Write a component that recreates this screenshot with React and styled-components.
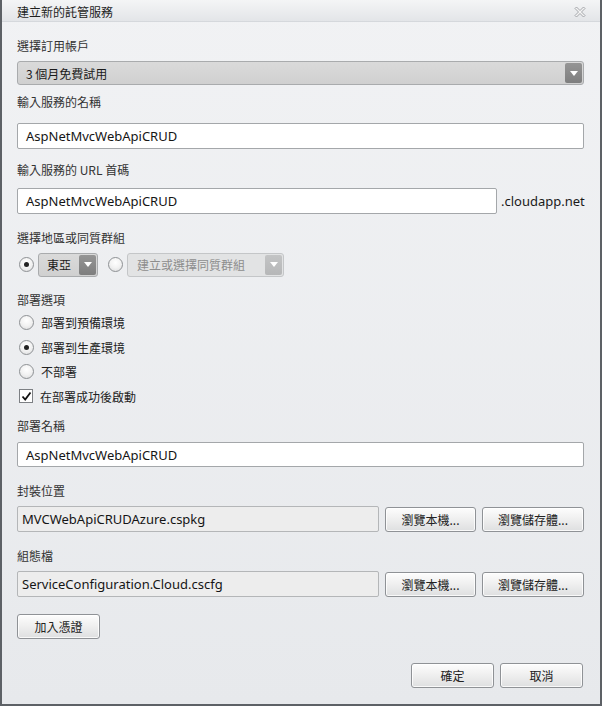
import React from "react";
import styled, { createGlobalStyle } from "styled-components";

const Global = createGlobalStyle`
  html, body { margin: 0; padding: 0; background: #ffffff; }
  * { box-sizing: border-box; }
`;

const CJK = `"Noto Sans CJK TC", "Noto Sans", sans-serif`;
const LAT = `"Noto Sans", "Noto Sans CJK TC", sans-serif`;

const Frame = styled.div`
  width: 602px;
  height: 706px;
  border-left: 2px solid #5d6166;
  border-right: 2px solid #5d6166;
  border-bottom: 2px solid #5d6166;
  background: linear-gradient(#f1f2f4, #e7e9ec);
  display: flex;
  flex-direction: column;
  font-family: ${CJK};
  & > * { flex-shrink: 0; }
`;

const TitleBar = styled.div`
  height: 22px;
  display: flex;
  align-items: center;
  justify-content: space-between;
  padding: 3px 14px 0 15px;
  background: linear-gradient(#f4f5f6, #e3e5e8);
  border-bottom: 1px solid #d5d8dc;
`;

const Title = styled.span`
  font-size: 12px;
  color: #1e1e1e;
  line-height: 16px;
`;

const Content = styled.div`
  display: flex;
  flex-direction: column;
  padding: 0 16px 0 15px;
  & > * { flex-shrink: 0; }
`;

const Label = styled.div`
  margin-top: ${(p) => p.$mt}px;
  height: 16px;
  line-height: 16px;
  font-size: 12px;
  color: #333;
`;

const Row = styled.div`
  margin-top: ${(p) => p.$mt || 0}px;
  display: flex;
  align-items: center;
  gap: ${(p) => p.$gap || 6}px;
  height: ${(p) => p.$h}px;
`;

const Select = styled.div`
  height: 24px;
  width: ${(p) => (p.$w ? p.$w + "px" : "100%")};
  flex: ${(p) => (p.$w ? "none" : "1 1 auto")};
  display: flex;
  align-items: center;
  border: 1px solid ${(p) => (p.$disabled ? "#c4c6c8" : "#a9abad")};
  border-radius: 3px;
  background: ${(p) => (p.$disabled ? "#e2e3e4" : "linear-gradient(#dadada, #d0d0d0)")};
  padding: 1px;
`;

const SelectText = styled.span`
  flex: 1;
  padding-left: ${(p) => p.$pl}px;
  font-size: 12px;
  color: ${(p) => (p.$disabled ? "#8d8d8d" : "#1a1a1a")};
  font-family: ${CJK};
  white-space: nowrap;
`;

const Arrow = styled.span`
  width: 17px;
  height: 20px;
  border-radius: 2px;
  background: ${(p) => (p.$disabled ? "linear-gradient(#c3c4c5,#b6b7b8)" : "linear-gradient(#959595, #7e7e7e)")};
  display: flex;
  align-items: center;
  justify-content: center;
`;

const Input = styled.div`
  height: ${(p) => p.$h || 26}px;
  width: ${(p) => (p.$w ? p.$w + "px" : "auto")};
  flex: none;
  margin-top: ${(p) => p.$mt || 0}px;
  border: 1px solid ${(p) => (p.$ro ? "#b4b6b8" : "#a4a7aa")};
  border-radius: 2px;
  background: ${(p) => (p.$ro ? "#ededed" : "#ffffff")};
  display: flex;
  align-items: center;
  padding-left: ${(p) => (p.$ro ? 4 : 8)}px;
  font-family: ${LAT};
  font-size: 13px;
  color: #151515;
  white-space: nowrap;
`;

const Suffix = styled.span`
  font-family: ${LAT};
  font-size: 13px;
  color: #1a1a1a;
`;

const Button = styled.button`
  width: ${(p) => p.$w}px;
  height: ${(p) => p.$h || 25}px;
  flex: none;
  border: 1px solid #8f9296;
  border-radius: 3px;
  background: linear-gradient(#fdfdfd 0%, #f0f0f0 45%, #dedfe0 100%);
  box-shadow: inset 0 0 0 1px rgba(255, 255, 255, 0.8);
  font-family: ${CJK};
  font-size: 12px;
  color: #222;
  padding: 0;
`;

const Footer = styled.div`
  margin-top: ${(p) => p.$mt}px;
  display: flex;
  justify-content: flex-end;
  gap: 6px;
  padding-right: 1px;
`;

const RadioCircle = styled.span`
  width: 15px;
  height: 15px;
  flex: none;
  border-radius: 50%;
  border: 1px solid #8e9194;
  background: radial-gradient(circle at 50% 35%, #ffffff 0%, #f2f2f2 50%, #d9dadb 100%);
  display: flex;
  align-items: center;
  justify-content: center;
  &::after {
    content: "";
    width: 5px;
    height: 5px;
    border-radius: 50%;
    background: #222;
    display: ${(p) => (p.$on ? "block" : "none")};
  }
`;

const OptionRow = styled.div`
  height: ${(p) => p.$h || 24}px;
  margin-top: ${(p) => p.$mt || 0}px;
  display: flex;
  align-items: center;
  gap: 7px;
  padding-left: ${(p) => p.$pl || 2}px;
  font-size: 12px;
  color: #222;
`;

const Check = styled.span`
  width: 14px;
  height: 14px;
  flex: none;
  border: 1px solid #7d8084;
  background: #fff;
  display: flex;
  align-items: center;
  justify-content: center;
`;

const DownArrow = ({ color = "#fff" }) => (
  <svg width="8" height="5" viewBox="0 0 8 5">
    <path d="M0 0 L8 0 L4 5 Z" fill={color} />
  </svg>
);

const CloseIcon = () => (
  <svg width="12" height="12" viewBox="0 0 12 12">
    <path
      d="M1 2.5 L2.5 1 L6 4.5 L9.5 1 L11 2.5 L7.5 6 L11 9.5 L9.5 11 L6 7.5 L2.5 11 L1 9.5 L4.5 6 Z"
      fill="#f4f4f4"
      stroke="#9a9ca0"
      strokeWidth="0.9"
    />
  </svg>
);

const CheckMark = () => (
  <svg width="11" height="11" viewBox="0 0 11 11">
    <path d="M1.5 5.5 L4.2 8.5 L9.5 1.5" fill="none" stroke="#111" strokeWidth="1.8" />
  </svg>
);

export default function App() {
  return (
    <>
      <Global />
      <Frame>
        <TitleBar>
          <Title>建立新的託管服務</Title>
          <CloseIcon />
        </TitleBar>
        <Content>
          <Label $mt={16}>選擇訂用帳戶</Label>
          <Row $mt={7} $h={24}>
            <Select>
              <SelectText $pl={7}>3 個月免費試用</SelectText>
              <Arrow>
                <DownArrow />
              </Arrow>
            </Select>
          </Row>

          <Label $mt={9}>輸入服務的名稱</Label>
          <Input $mt={13}>AspNetMvcWebApiCRUD</Input>

          <Label $mt={13}>輸入服務的 URL 首碼</Label>
          <Row $mt={10} $h={26} $gap={4}>
            <Input $w={480}>AspNetMvcWebApiCRUD</Input>
            <Suffix>.cloudapp.net</Suffix>
          </Row>

          <Label $mt={16}>選擇地區或同質群組</Label>
          <Row $mt={6} $h={25} $gap={4}>
            <OptionRow $pl={2}>
              <RadioCircle $on />
            </OptionRow>
            <Select $w={60}>
              <SelectText $pl={7}>東亞</SelectText>
              <Arrow>
                <DownArrow />
              </Arrow>
            </Select>
            <OptionRow $pl={6}>
              <RadioCircle />
            </OptionRow>
            <Select $w={157} $disabled>
              <SelectText $pl={8} $disabled>
                建立或選擇同質群組
              </SelectText>
              <Arrow $disabled>
                <DownArrow />
              </Arrow>
            </Select>
          </Row>

          <Label $mt={15}>部署選項</Label>
          <OptionRow $mt={2}>
            <RadioCircle />
            部署到預備環境
          </OptionRow>
          <OptionRow $mt={1}>
            <RadioCircle $on />
            部署到生產環境
          </OptionRow>
          <OptionRow $mt={0}>
            <RadioCircle />
            不部署
          </OptionRow>
          <OptionRow $mt={1}>
            <Check>
              <CheckMark />
            </Check>
            在部署成功後啟動
          </OptionRow>

          <Label $mt={10}>部署名稱</Label>
          <Input $mt={8} $h={25}>AspNetMvcWebApiCRUD</Input>

          <Label $mt={16}>封裝位置</Label>
          <Row $mt={7} $h={26}>
            <Input $ro $w={362}>MVCWebApiCRUDAzure.cspkg</Input>
            <Button $w={91}>瀏覽本機...</Button>
            <Button $w={102}>瀏覽儲存體...</Button>
          </Row>

          <Label $mt={16}>組態檔</Label>
          <Row $mt={7} $h={26}>
            <Input $ro $w={362}>ServiceConfiguration.Cloud.cscfg</Input>
            <Button $w={91}>瀏覽本機...</Button>
            <Button $w={102}>瀏覽儲存體...</Button>
          </Row>

          <Row $mt={17} $h={25}>
            <Button $w={83}>加入憑證</Button>
          </Row>

          <Footer $mt={24}>
            <Button $w={83}>確定</Button>
            <Button $w={83}>取消</Button>
          </Footer>
        </Content>
      </Frame>
    </>
  );
}
